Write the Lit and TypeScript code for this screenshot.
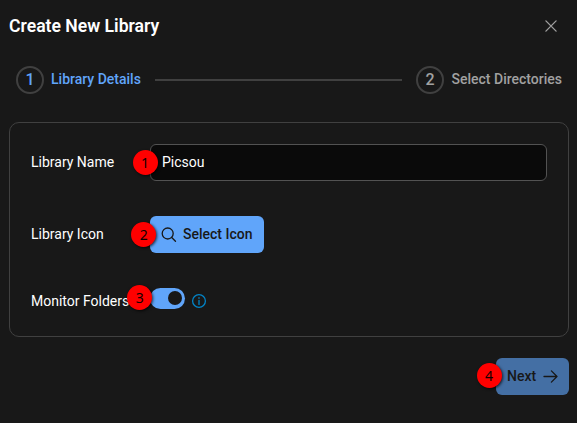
import { LitElement, html, css, svg } from "lit";
import { customElement } from "lit/decorators.js";
import { classMap } from "lit/directives/class-map.js";

const icon = (size: number, body: unknown) => html`
  <svg class="icon" width=${size} height=${size} viewBox="0 0 14 14" aria-hidden="true">${body}</svg>`;

const closeIcon = svg`<path d="M1.9 1.9 12.1 12.1M12.1 1.9 1.9 12.1" />`;
const searchIcon = svg`<circle cx="5.7" cy="5.5" r="5.5" /><path d="m9.7 9.5 3.8 3.8" />`;
const arrowIcon = svg`<path d="M0 6.5h13M7.4.9 13 6.5l-5.6 5.6" />`;
const infoIcon = svg`<circle cx="7" cy="7" r="6.4" /><path d="M7 6.3v4.1M7 3.7v.6" />`;

@customElement("step-badge")
export class StepBadge extends LitElement {
  static styles = css`
    :host {
      position: absolute;
      display: grid;
      place-items: center;
      width: 25px;
      height: 25px;
      border-radius: 50%;
      background: #ff0000;
      color: #100;
      font: 14px/25px "Noto Sans", sans-serif;
      box-shadow: 1px 1px 3px rgba(0, 0, 0, 0.75);
    }
  `;
  render() {
    return html`<slot></slot>`;
  }
}

@customElement("app-root")
export class AppRoot extends LitElement {
  static styles = css`
    :host {
      display: block;
      box-sizing: border-box;
      height: 423px;
      padding: 9px 8px 0 9px;
      background: #181818;
      color: #fff;
      font: 14px/21px Roboto, sans-serif;
      overflow: hidden;
    }
    .icon {
      display: block;
      overflow: visible;
      fill: none;
      stroke: currentColor;
      stroke-width: 1.3;
      stroke-linecap: round;
      stroke-linejoin: round;
    }
    .header {
      display: flex;
      align-items: center;
      justify-content: space-between;
      height: 34px;
      padding-right: 11px;
    }
    .title {
      font-size: 17.6px;
      font-weight: 600;
    }
    .close {
      color: #a1a1a1;
    }
    .steps {
      display: flex;
      align-items: center;
      height: 28px;
      margin-top: 23px;
      padding: 0 7px;
      font-weight: 500;
      color: #a1a1a1;
    }
    .step {
      display: flex;
      align-items: center;
      gap: 7px;
      white-space: nowrap;
    }
    .step + .line + .step {
      gap: 7.5px;
    }
    .label {
      padding-bottom: 2px;
    }
    .active {
      color: #60a5fa;
    }
    .number {
      box-sizing: border-box;
      width: 28px;
      height: 28px;
      border: 2px solid #404040;
      border-radius: 50%;
      font-size: 16px;
      line-height: 24px;
      text-align: center;
    }
    .line {
      flex: 1;
      height: 2px;
      margin: 0 14px;
      background: #404040;
    }
    .panel {
      box-sizing: border-box;
      height: 215px;
      margin-top: 28px;
      padding: 21px;
      border: 1px solid #404040;
      border-radius: 10px;
    }
    .row {
      display: grid;
      grid-template-columns: 119px 1fr;
      align-items: center;
      height: 37px;
      margin-bottom: 35px;
    }
    .field {
      position: relative;
      display: flex;
      align-items: center;
    }
    .input {
      box-sizing: border-box;
      width: 100%;
      height: 37px;
      padding: 7px 11px;
      border: 1px solid #525252;
      border-radius: 6px;
      background: #0a0a0a;
    }
    .button {
      box-sizing: border-box;
      display: flex;
      align-items: center;
      gap: 7px;
      height: 37px;
      padding: 0 11px 0 12px;
      border-radius: 6px;
      background: #60a5fa;
      color: #181818;
      font-weight: 500;
    }
    .monitor {
      height: 24px;
      margin: 0;
      align-items: end;
    }
    .monitor .field {
      height: 24px;
      align-items: flex-start;
    }
    .switch {
      box-sizing: border-box;
      width: 35px;
      height: 21px;
      padding: 3px;
      border-radius: 11px;
      background: #60a5fa;
    }
    .knob {
      width: 14px;
      height: 14px;
      margin-left: auto;
      border-radius: 50%;
      background: #181818;
    }
    .info {
      margin: 6px 0 0 7px;
      color: #0284c7;
    }
    .footer {
      display: flex;
      justify-content: flex-end;
      margin-top: 21px;
    }
    .action {
      position: relative;
    }
    .next {
      width: 73px;
      padding: 0 11px;
      justify-content: space-between;
      background: #446fa4;
    }
    .b1 { left: -17.5px; top: 5.5px; }
    .b2 { left: -18.7px; top: 5.5px; }
    .b3 { left: -22.7px; top: -3.4px; }
    .b4 { left: -19.5px; top: 5.2px; }
  `;

  private step(n: number, label: string, active: boolean) {
    return html`<div class=${classMap({ step: true, active })}>
      <span class="number">${n}</span><span class="label">${label}</span>
    </div>`;
  }

  render() {
    return html`
      <div class="header">
        <div class="title">Create New Library</div>
        <div class="close">${icon(14, closeIcon)}</div>
      </div>
      <div class="steps">
        ${this.step(1, "Library Details", true)}
        <div class="line"></div>
        ${this.step(2, "Select Directories", false)}
      </div>
      <div class="panel">
        <div class="row">
          <div>Library Name</div>
          <div class="field">
            <div class="input">Picsou</div>
            <step-badge class="b1">1</step-badge>
          </div>
        </div>
        <div class="row">
          <div>Library Icon</div>
          <div class="field">
            <div class="button">${icon(14, searchIcon)}<span>Select Icon</span></div>
            <step-badge class="b2">2</step-badge>
          </div>
        </div>
        <div class="row monitor">
          <div>Monitor Folders</div>
          <div class="field">
            <div class="switch"><div class="knob"></div></div>
            <div class="info">${icon(14, infoIcon)}</div>
            <step-badge class="b3">3</step-badge>
          </div>
        </div>
      </div>
      <div class="footer">
        <div class="action">
          <div class="button next"><span>Next</span>${icon(14, arrowIcon)}</div>
          <step-badge class="b4">4</step-badge>
        </div>
      </div>
    `;
  }
}
